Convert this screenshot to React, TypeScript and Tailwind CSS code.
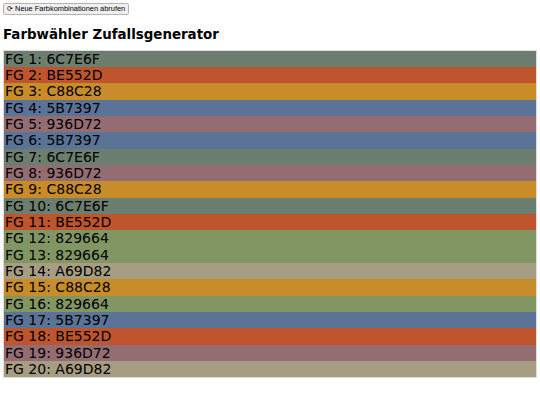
const colors = [
  "6C7E6F", "BE552D", "C88C28", "5B7397", "936D72", "5B7397", "6C7E6F", "936D72", "C88C28", "6C7E6F",
  "BE552D", "829664", "829664", "A69D82", "C88C28", "829664", "5B7397", "BE552D", "936D72", "A69D82",
];

const bg: Record<string, string> = {
  "6C7E6F": "bg-[#6C7E6F]",
  "BE552D": "bg-[#BE552D]",
  "C88C28": "bg-[#C88C28]",
  "5B7397": "bg-[#5B7397]",
  "936D72": "bg-[#936D72]",
  "829664": "bg-[#829664]",
  "A69D82": "bg-[#A69D82]",
};

export default function App() {
  return (
    <div className="p-[3px] bg-white min-h-[405px] [font-family:'DejaVu_Sans',sans-serif] text-black">
      <button className="flex items-center h-[12px] px-[3px] border border-[#b4b4b4] rounded-[2px] bg-[#efefef] text-[7.4px] leading-none text-black [font-family:'Liberation_Sans',sans-serif]">
        ⟳ Neue Farbkombinationen abrufen
      </button>
      <h1 className="mt-[11px] mb-[6.5px] text-[13.4px] leading-[17px] font-bold">Farbwähler Zufallsgenerator</h1>
      <div className="border border-[#dcdcdc]">
        {colors.map((c, i) => (
          <div key={i} className={`${bg[c]} text-[14px] leading-[16.35px] pl-px`}>
            FG {i + 1}: {c}
          </div>
        ))}
      </div>
    </div>
  );
}
